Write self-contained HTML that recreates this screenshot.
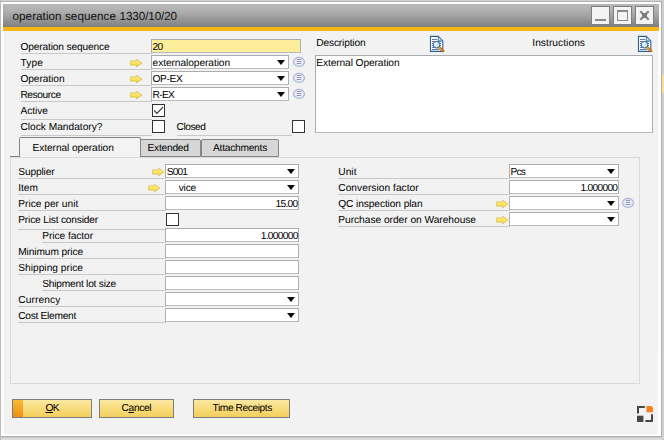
<!DOCTYPE html>
<html><head><meta charset="utf-8"><title>operation sequence 1330/10/20</title>
<style>
html,body{margin:0;padding:0;}
body{width:664px;height:440px;overflow:hidden;background:linear-gradient(#d2d2d2 0,#d2d2d2 1px,#b2b2b2 1px,#b2b2b2 3px,#b4b4b4 436px,#b0b0b0 437px,#c6c6c6 437px,#c6c6c6 438px,#dcdcdc 438px);font-family:"Liberation Sans",sans-serif;font-size:10.2px;color:#000;position:relative;}
.win div,.win svg,.win span,.win i{position:absolute;box-sizing:border-box;display:block;}
.win{position:absolute;left:0;top:0;width:664px;height:440px;}
.frame{left:1px;top:2px;width:660px;height:434px;background:#fdfdfd;}
.redge{left:662px;top:0;width:2px;height:440px;background:#cecece;}
.ledge{left:0;top:0;width:1px;height:440px;background:#bcbcbc;}
.mark{left:662px;top:75px;width:2px;height:18px;background:#fae08c;}
.content{left:4px;top:4px;width:654px;height:430px;background:#f2f2f2;}
.title{left:3px;top:4px;width:656px;height:23px;background:linear-gradient(#b8b8b8,#b2b2b2 25%,#a0a0a0 55%,#8a8a8a 85%,#808080);}
.orange{left:3px;top:27px;width:656px;height:4px;background:#f9b416;}
.wbtn{top:2px;width:19px;height:19px;background:#f3f3f3;border:1px solid #7f7f7f;}
.t{white-space:nowrap;line-height:12px;height:12px;text-rendering:geometricPrecision;font-style:normal;}
.lbl{border-bottom:1px solid #c8c8c8;}
.in{background:#fff;border:1px solid #b9b9b9;border-top-color:#a9adb0;border-left-color:#adb0b3;border-right-color:#adb0b3;}
.dd{width:0;height:0;border-left:4.6px solid transparent;border-right:4.6px solid transparent;border-top:5.2px solid #0c0c0c;top:4px;right:3px;}
.cb{width:13px;height:13px;background:#fff;border:1px solid #333;}
.panel{border:1px solid #dadada;background:#f2f2f2;}
.stub{background:#858585;}
.tab{border:1px solid #858585;border-radius:2px 2px 0 0;background:#d6d6d6;}
.tab.act{background:#f3f3f3;border-bottom:none;}
.btn{height:19px;border:1px solid #7e7e7e;background:linear-gradient(#fbe8a4,#f8dc7c 50%,#f4cf5c);}
.stripe{left:0;top:0;width:10px;height:17px;background:linear-gradient(#f6bc34,#ef8e12);}
svg{overflow:visible}
</style></head><body>
<div class="win">
<div class="frame"></div><div class="redge"></div><div class="ledge"></div><div class="mark"></div>
<div class="content"></div>
<div class="title">
<span class="t" style="left:9.50px;top:6px;letter-spacing:0.046px;font-size:11.7px;line-height:14px;height:14px;color:#111;">operation sequence</span>
<span class="t" style="left:116.60px;top:6px;letter-spacing:-0.110px;font-size:11.7px;line-height:14px;height:14px;color:#111;">1330/10/20</span>
<div class="wbtn" style="left:588px"><i style="left:3px;top:12px;width:11px;height:2px;background:#8a8a8a"></i></div>
<div class="wbtn" style="left:610px"><i style="left:3px;top:3px;width:11px;height:11px;border:1px solid #8a8a8a;border-top-width:2px"></i></div>
<div class="wbtn" style="left:632px"><svg style="left:3px;top:3px" width="11" height="11" viewBox="0 0 11 11"><path d="M1.3 1.3L9.7 9.7M9.7 1.3L1.3 9.7" stroke="#838383" stroke-width="2.2"/><rect x="3" y="3" width="5" height="5" fill="#7c7c7c"/></svg></div>
</div>
<div class="orange"></div>
<svg width="0" height="0" style="left:0;top:0"><defs><linearGradient id="ag" x1="0" y1="0" x2="0" y2="1"><stop offset="0" stop-color="#fff39a"/><stop offset="1" stop-color="#f7d53a"/></linearGradient><radialGradient id="cg" cx="0.5" cy="0.45" r="0.6"><stop offset="0" stop-color="#f6f8ff"/><stop offset="1" stop-color="#d6dcf0"/></radialGradient></defs></svg>
<div class="lbl" style="left:21px;top:39px;width:131px;height:15px"><span class="t" style="left:-0.60px;top:3px;letter-spacing:-0.148px;">Operation sequence</span></div>
<div class="lbl" style="left:21px;top:55px;width:131px;height:15px"><span class="t" style="left:-0.60px;top:3px;letter-spacing:0.127px;">Type</span></div>
<div class="lbl" style="left:21px;top:71px;width:131px;height:15px"><span class="t" style="left:-0.60px;top:3px;letter-spacing:-0.072px;">Operation</span></div>
<div class="lbl" style="left:21px;top:87px;width:131px;height:15px"><span class="t" style="left:-0.60px;top:3px;letter-spacing:-0.407px;">Resource</span></div>
<div class="lbl" style="left:21px;top:103px;width:131px;height:17px"><span class="t" style="left:-0.60px;top:3px;letter-spacing:-0.025px;">Active</span></div>
<div class="lbl" style="left:21px;top:119px;width:131px;height:17px"><span class="t" style="left:-0.60px;top:3px;letter-spacing:-0.001px;">Clock Mandatory?</span></div>
<div class="in" style="left:151px;top:39px;width:150px;height:14px;background:#fdee9b;"><span class="t" style="left:0.60px;top:2px;letter-spacing:-0.872px;">20</span></div>
<svg class="ico" style="left:130px;top:58px" width="13" height="10" viewBox="0 0 13 10"><path d="M0.6 2.9H6.6V1.2L11.9 5L6.6 8.8V7.1H0.6Z" fill="url(#ag)" stroke="#d8b83c" stroke-width="0.7" stroke-linejoin="round"/></svg>
<div class="in" style="left:151px;top:55px;width:138px;height:14px;"><span class="t" style="left:0.60px;top:2px;letter-spacing:-0.078px;">externaloperation</span><i class="dd"></i></div>
<svg class="ico" style="left:292px;top:56px" width="14" height="12" viewBox="0 0 14 12"><ellipse cx="7" cy="5.9" rx="5.5" ry="4.6" fill="url(#cg)" stroke="#b0b6d0" stroke-width="1.2"/><path d="M4.8 3.5H9.2M4.8 5.5H9.2M4.8 7.5H9.2" stroke="#9098b6" stroke-width="1"/></svg>
<svg class="ico" style="left:130px;top:74px" width="13" height="10" viewBox="0 0 13 10"><path d="M0.6 2.9H6.6V1.2L11.9 5L6.6 8.8V7.1H0.6Z" fill="url(#ag)" stroke="#d8b83c" stroke-width="0.7" stroke-linejoin="round"/></svg>
<div class="in" style="left:151px;top:71px;width:138px;height:14px;"><span class="t" style="left:0.60px;top:2px;letter-spacing:-0.401px;">OP-EX</span><i class="dd"></i></div>
<svg class="ico" style="left:292px;top:72px" width="14" height="12" viewBox="0 0 14 12"><ellipse cx="7" cy="5.9" rx="5.5" ry="4.6" fill="url(#cg)" stroke="#b0b6d0" stroke-width="1.2"/><path d="M4.8 3.5H9.2M4.8 5.5H9.2M4.8 7.5H9.2" stroke="#9098b6" stroke-width="1"/></svg>
<svg class="ico" style="left:130px;top:90px" width="13" height="10" viewBox="0 0 13 10"><path d="M0.6 2.9H6.6V1.2L11.9 5L6.6 8.8V7.1H0.6Z" fill="url(#ag)" stroke="#d8b83c" stroke-width="0.7" stroke-linejoin="round"/></svg>
<div class="in" style="left:151px;top:87px;width:138px;height:14px;"><span class="t" style="left:0.60px;top:2px;letter-spacing:-0.686px;">R-EX</span><i class="dd"></i></div>
<svg class="ico" style="left:292px;top:88px" width="14" height="12" viewBox="0 0 14 12"><ellipse cx="7" cy="5.9" rx="5.5" ry="4.6" fill="url(#cg)" stroke="#b0b6d0" stroke-width="1.2"/><path d="M4.8 3.5H9.2M4.8 5.5H9.2M4.8 7.5H9.2" stroke="#9098b6" stroke-width="1"/></svg>
<div class="cb" style="left:152px;top:104px"><svg style="left:0;top:0" width="11" height="11" viewBox="0 0 11 11"><path d="M1.2 5.4L3.9 8.4L10 2.2" stroke="#333" stroke-width="1.2" fill="none"/></svg></div>
<div class="cb" style="left:152px;top:120px"></div>
<div class="lbl" style="left:177px;top:119px;width:115px;height:17px"><span class="t" style="left:-0.50px;top:3px;letter-spacing:-0.453px;">Closed</span></div>
<div class="cb" style="left:292px;top:120px"></div>
<div class="t" style="left:316.25px;top:38px;letter-spacing:-0.156px;">Description</div>
<svg class="ico" style="left:429px;top:35px" width="16" height="18" viewBox="0 0 16 18"><path d="M1.5 1.4H9.2L13.8 6V16.4H1.5Z" fill="#fff" stroke="#2e5e90" stroke-width="1.1"/><path d="M9.2 1.4V6H13.8Z" fill="#cfdcea" stroke="#2e5e90" stroke-width="0.8" stroke-linejoin="round"/><path d="M3 4.5H8M3 6.5H12M3 8.5H12M3 10.5H12M3 12.5H12M3 14.5H10" stroke="#5b78c4" stroke-width="1"/><circle cx="7.6" cy="9.8" r="3.3" fill="#c4e6fa" stroke="#34609c" stroke-width="1"/><circle cx="6.8" cy="9" r="1.4" fill="#f2faff"/><path d="M10.4 12.6L14.2 16" stroke="#7a4a10" stroke-width="2.4" stroke-linecap="round"/><path d="M10.4 12.6L14.2 16" stroke="#f09a20" stroke-width="1.5" stroke-linecap="round"/></svg>
<div class="t" style="left:532.25px;top:38px;letter-spacing:0.055px;">Instructions</div>
<svg class="ico" style="left:637px;top:35px" width="16" height="18" viewBox="0 0 16 18"><path d="M1.5 1.4H9.2L13.8 6V16.4H1.5Z" fill="#fff" stroke="#2e5e90" stroke-width="1.1"/><path d="M9.2 1.4V6H13.8Z" fill="#cfdcea" stroke="#2e5e90" stroke-width="0.8" stroke-linejoin="round"/><path d="M3 4.5H8M3 6.5H12M3 8.5H12M3 10.5H12M3 12.5H12M3 14.5H10" stroke="#5b78c4" stroke-width="1"/><circle cx="7.6" cy="9.8" r="3.3" fill="#c4e6fa" stroke="#34609c" stroke-width="1"/><circle cx="6.8" cy="9" r="1.4" fill="#f2faff"/><path d="M10.4 12.6L14.2 16" stroke="#7a4a10" stroke-width="2.4" stroke-linecap="round"/><path d="M10.4 12.6L14.2 16" stroke="#f09a20" stroke-width="1.5" stroke-linecap="round"/></svg>
<div class="in area" style="left:315px;top:55px;width:338px;height:78px;"><span class="t" style="left:0.25px;top:2px;letter-spacing:-0.095px;">External Operation</span></div>
<div class="panel" style="left:10px;top:157px;width:630px;height:227px"></div>
<div class="stub" style="left:10px;top:156px;width:10px;height:1px"></div>
<div class="tab act" style="left:19px;top:137px;width:122px;height:20px"><span class="t" style="left:12.50px;top:5px;letter-spacing:-0.080px;">External operation</span></div>
<div class="tab" style="left:140px;top:139px;width:61px;height:18px"><span class="t" style="left:6.50px;top:3px;letter-spacing:-0.227px;">Extended</span></div>
<div class="tab" style="left:201px;top:139px;width:78px;height:18px"><span class="t" style="left:11.00px;top:3px;letter-spacing:-0.239px;">Attachments</span></div>
<div class="lbl" style="left:18px;top:164px;width:148px;height:15px"><span class="t" style="left:0.25px;top:3px;letter-spacing:-0.143px;">Supplier</span></div>
<svg class="ico" style="left:152px;top:167px" width="13" height="10" viewBox="0 0 13 10"><path d="M0.6 2.9H6.6V1.2L11.9 5L6.6 8.8V7.1H0.6Z" fill="url(#ag)" stroke="#d8b83c" stroke-width="0.7" stroke-linejoin="round"/></svg>
<div class="in" style="left:165px;top:164px;width:134px;height:14px;"><span class="t" style="left:0.75px;top:2px;letter-spacing:-0.887px;">S001</span><i class="dd"></i></div>
<div class="lbl" style="left:18px;top:180px;width:148px;height:15px"><span class="t" style="left:0.25px;top:3px;letter-spacing:-0.020px;">Item</span></div>
<svg class="ico" style="left:148px;top:183px" width="13" height="10" viewBox="0 0 13 10"><path d="M0.6 2.9H6.6V1.2L11.9 5L6.6 8.8V7.1H0.6Z" fill="url(#ag)" stroke="#d8b83c" stroke-width="0.7" stroke-linejoin="round"/></svg>
<div class="in" style="left:165px;top:180px;width:134px;height:14px;"><span class="t" style="left:12.75px;top:2px;letter-spacing:-0.219px;">vice</span><i class="dd"></i></div>
<div class="lbl" style="left:18px;top:196px;width:148px;height:15px"><span class="t" style="left:0.25px;top:3px;letter-spacing:-0.002px;">Price per unit</span></div>
<div class="in" style="left:165px;top:196px;width:134px;height:14px;"><span class="t" style="left:109.50px;top:2px;letter-spacing:-0.680px;">15.00</span></div>
<div class="lbl" style="left:18px;top:212px;width:148px;height:18px"><span class="t" style="left:0.25px;top:3px;letter-spacing:-0.183px;">Price List consider</span></div>
<div class="cb" style="left:166px;top:213px"></div>
<div class="lbl" style="left:42px;top:228px;width:124px;height:15px"><span class="t" style="left:0.25px;top:3px;letter-spacing:-0.065px;">Price factor</span></div>
<div class="in" style="left:165px;top:228px;width:134px;height:14px;"><span class="t" style="left:94.80px;top:2px;letter-spacing:-0.712px;">1.000000</span></div>
<div class="lbl" style="left:18px;top:244px;width:148px;height:15px"><span class="t" style="left:0.25px;top:3px;letter-spacing:-0.114px;">Minimum price</span></div>
<div class="in" style="left:165px;top:244px;width:134px;height:14px;"></div>
<div class="lbl" style="left:18px;top:260px;width:148px;height:15px"><span class="t" style="left:0.25px;top:3px;letter-spacing:0.013px;">Shipping price</span></div>
<div class="in" style="left:165px;top:260px;width:134px;height:14px;"></div>
<div class="lbl" style="left:42px;top:276px;width:124px;height:15px"><span class="t" style="left:0.25px;top:3px;letter-spacing:-0.225px;">Shipment lot size</span></div>
<div class="in" style="left:165px;top:276px;width:134px;height:14px;"></div>
<div class="lbl" style="left:18px;top:292px;width:148px;height:15px"><span class="t" style="left:0.25px;top:3px;letter-spacing:0.115px;">Currency</span></div>
<div class="in" style="left:165px;top:292px;width:134px;height:14px;"><i class="dd"></i></div>
<div class="lbl" style="left:18px;top:308px;width:148px;height:15px"><span class="t" style="left:0.25px;top:3px;letter-spacing:-0.284px;">Cost Element</span></div>
<div class="in" style="left:165px;top:308px;width:134px;height:14px;"><i class="dd"></i></div>
<div class="lbl" style="left:338px;top:164px;width:172px;height:15px"><span class="t" style="left:0.25px;top:3px;letter-spacing:0.031px;">Unit</span></div>
<div class="in" style="left:509px;top:164px;width:110px;height:14px;"><span class="t" style="left:0.50px;top:2px;letter-spacing:-0.828px;">Pcs</span><i class="dd"></i></div>
<div class="lbl" style="left:338px;top:180px;width:172px;height:15px"><span class="t" style="left:0.25px;top:3px;letter-spacing:0.039px;">Conversion factor</span></div>
<div class="in" style="left:509px;top:180px;width:110px;height:14px;"><span class="t" style="left:70.50px;top:2px;letter-spacing:-0.713px;">1.000000</span></div>
<div class="lbl" style="left:338px;top:196px;width:172px;height:15px"><span class="t" style="left:0.25px;top:3px;letter-spacing:-0.102px;">QC inspection plan</span></div>
<svg class="ico" style="left:496px;top:198.5px" width="13" height="10" viewBox="0 0 13 10"><path d="M0.6 2.9H6.6V1.2L11.9 5L6.6 8.8V7.1H0.6Z" fill="url(#ag)" stroke="#d8b83c" stroke-width="0.7" stroke-linejoin="round"/></svg>
<div class="in" style="left:509px;top:196px;width:110px;height:14px;"><i class="dd"></i></div>
<svg class="ico" style="left:621.4px;top:197px" width="14" height="12" viewBox="0 0 14 12"><ellipse cx="7" cy="5.9" rx="5.5" ry="4.6" fill="url(#cg)" stroke="#b0b6d0" stroke-width="1.2"/><path d="M4.8 3.5H9.2M4.8 5.5H9.2M4.8 7.5H9.2" stroke="#9098b6" stroke-width="1"/></svg>
<div class="lbl" style="left:338px;top:212px;width:172px;height:15px"><span class="t" style="left:0.25px;top:3px;letter-spacing:-0.023px;">Purchase order on Warehouse</span></div>
<svg class="ico" style="left:496px;top:214.5px" width="13" height="10" viewBox="0 0 13 10"><path d="M0.6 2.9H6.6V1.2L11.9 5L6.6 8.8V7.1H0.6Z" fill="url(#ag)" stroke="#d8b83c" stroke-width="0.7" stroke-linejoin="round"/></svg>
<div class="in" style="left:509px;top:212px;width:110px;height:14px;"><i class="dd"></i></div>
<div class="btn" style="left:12px;top:399px;width:80px"><i class="stripe"></i><span class="t" style="left:32.50px;top:3px;letter-spacing:-0.617px;"><u>O</u>K</span></div>
<div class="btn" style="left:99px;top:399px;width:75px"><span class="t" style="left:21.50px;top:3px;letter-spacing:-0.328px;">C<u>a</u>ncel</span></div>
<div class="btn" style="left:193px;top:399px;width:97px"><span class="t" style="left:18.50px;top:3px;letter-spacing:-0.403px;">Time Receipts</span></div>
<svg class="ico" style="left:637px;top:406px" width="16" height="16" viewBox="0 0 16 16"><path d="M1 7.4V1H7.8" fill="none" stroke="#454545" stroke-width="2"/><path d="M9.4 0H13.4Q16 0 16 2.6V6.2H9.4Z" fill="#f58220"/><rect x="0" y="9.7" width="6.4" height="6.3" fill="#454545"/><path d="M15 8.2V15H8.4" fill="none" stroke="#454545" stroke-width="2"/></svg>
</div>
</body></html>
